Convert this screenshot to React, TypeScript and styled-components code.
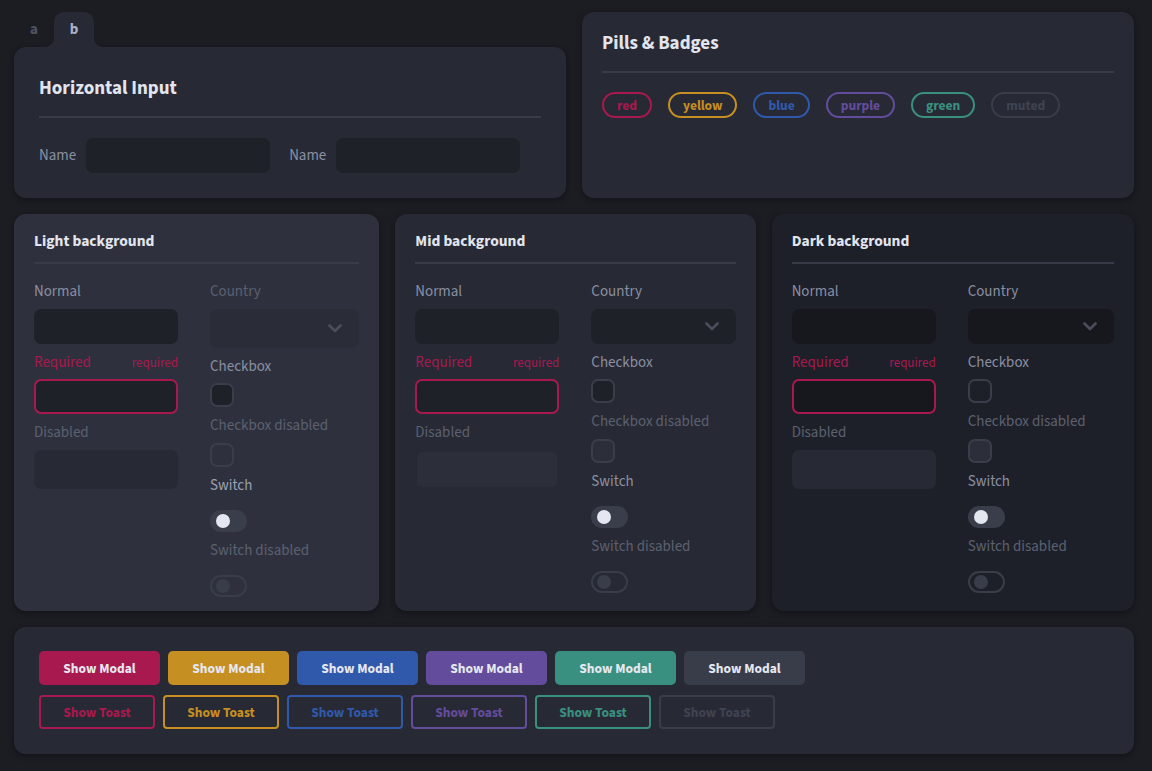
import React from "react";
import styled, { createGlobalStyle } from "styled-components";

const C = {
  page: "#1b1d23",
  card: "#272a34",
  light: "#2e313d",
  dark: "#1e2029",
  input: "#1f2129",
  divider: "#383b48",
  title: "#e2e4ee",
  label: "#8a8fa2",
  muted: "#5c6070",
  red: "#a8194f",
  yellow: "#c68f22",
  blue: "#3159ab",
  purple: "#634c9c",
  green: "#3a9080",
  gray: "#393d4a",
};

const GlobalStyle = createGlobalStyle`
  html, body { margin: 0; padding: 0; background: ${C.page}; }
  body { font-family: "Source Sans Pro", "Source Sans 3", Lato, "Noto Sans", sans-serif; }
  * { box-sizing: border-box; }
`;

const Page = styled.div`
  width: 1152px;
  padding: 12px 18px 18px 14px;
  display: flex;
  flex-direction: column;
`;

const TopRow = styled.div`
  display: grid;
  grid-template-columns: 1fr 1fr;
  gap: 16px;
`;

const MidRow = styled.div`
  display: grid;
  grid-template-columns: 365fr 360fr 362fr;
  gap: 16px;
  margin-top: 16px;
`;

const TabbedBox = styled.div`
  display: flex;
  flex-direction: column;
`;

const TabBar = styled.div`
  display: flex;
  height: 35px;
`;

const Tab = styled.div<{ $active?: boolean }>`
  position: relative;
  width: 40px;
  display: flex;
  align-items: center;
  justify-content: center;
  font-weight: 700;
  font-size: 15px;
  color: ${(p) => (p.$active ? "#a9b0c8" : "#4f5363")};
  background: ${(p) => (p.$active ? C.card : "transparent")};
  border-radius: 10px 10px 0 0;
  &::before,
  &::after {
    content: "";
    display: ${(p) => (p.$active ? "block" : "none")};
    position: absolute;
    bottom: 0;
    width: 10px;
    height: 10px;
  }
  &::before {
    left: -10px;
    background: radial-gradient(circle at 0 0, transparent 10px, ${C.card} 10.5px);
  }
  &::after {
    right: -10px;
    background: radial-gradient(circle at 100% 0, transparent 10px, ${C.card} 10.5px);
  }
`;

const Card = styled.div<{ $bg?: string }>`
  background: ${(p) => p.$bg || C.card};
  border-radius: 12px;
  box-shadow: 0 2px 6px rgba(0, 0, 0, 0.35);
`;

const HorizCard = styled(Card)`
  padding: 30px 25px 25px;
  flex: 1;
`;

const PillsCard = styled(Card)`
  padding: 20px 20px 20px;
`;

const BigTitle = styled.h2`
  margin: 0;
  font-size: 19px;
  line-height: 24px;
  font-weight: 700;
  color: ${C.title};
`;

const Divider = styled.div`
  height: 2px;
  background: ${C.divider};
`;

const HorizDivider = styled(Divider)`
  margin: 15px 0 20px;
`;

const PillsDivider = styled(Divider)`
  margin: 15px 0 19px;
`;

const HorizRow = styled.div`
  display: flex;
  gap: 19px;
`;

const HorizField = styled.label`
  display: flex;
  align-items: center;
  gap: 10px;
  font-size: 15px;
  color: ${C.label};
`;

const TextInput = styled.div<{ $w?: number; $bg?: string }>`
  width: ${(p) => (p.$w ? `${p.$w}px` : "100%")};
  height: 35px;
  border-radius: 7px;
  background: ${(p) => p.$bg || C.input};
`;

const PillRow = styled.div`
  display: flex;
  gap: 16px;
`;

const Pill = styled.span<{ $c: string; $t?: string }>`
  height: 26px;
  padding: 0 13px;
  border: 2px solid ${(p) => p.$c};
  border-radius: 13px;
  color: ${(p) => p.$t || p.$c};
  font-size: 13.5px;
  font-weight: 700;
  display: flex;
  align-items: center;
`;

type Variant = {
  bg: string;
  input: string;
  select: string;
  selectH: number;
  selectLabel: string;
  disabled: string;
  disabledBorder: string;
  check: string;
  checkDis: string;
  switchLabel: string;
};

const variants: Record<string, Variant> = {
  light: {
    bg: C.light,
    input: C.input,
    select: "#2a2d38",
    selectH: 39,
    selectLabel: C.muted,
    disabled: "#272a34",
    disabledBorder: "#272a34",
    check: C.input,
    checkDis: "transparent",
    switchLabel: "#9aa0b2",
  },
  mid: {
    bg: C.card,
    input: C.input,
    select: C.input,
    selectH: 35,
    selectLabel: C.label,
    disabled: "#2c2f3a",
    disabledBorder: C.card,
    check: C.input,
    checkDis: "#2c2f3a",
    switchLabel: C.label,
  },
  dark: {
    bg: C.dark,
    input: "#17181e",
    select: "#17181e",
    selectH: 35,
    selectLabel: C.label,
    disabled: "#272a34",
    disabledBorder: "#272a34",
    check: "transparent",
    checkDis: "#2c2f3a",
    switchLabel: C.label,
  },
};

const DemoCard = styled(Card)`
  padding: 17px 20px 14px;
`;

const DemoTitle = styled.h3`
  margin: 0;
  font-size: 15.5px;
  line-height: 20px;
  font-weight: 700;
  color: ${C.title};
`;

const DemoDivider = styled(Divider)`
  margin: 11px 0 18px;
`;

const DemoGrid = styled.div`
  display: grid;
  grid-template-columns: 144px 1fr;
  column-gap: 32px;
`;

const Column = styled.div`
  display: flex;
  flex-direction: column;
  gap: 9px;
`;

const Field = styled.div<{ $gap?: number }>`
  display: flex;
  flex-direction: column;
  gap: ${(p) => p.$gap ?? 7}px;
`;

const LabelRow = styled.div`
  display: flex;
  justify-content: space-between;
  align-items: baseline;
  height: 20px;
`;

const Label = styled.span<{ $c?: string }>`
  font-size: 15px;
  line-height: 20px;
  color: ${(p) => p.$c || C.label};
`;

const Hint = styled.span`
  font-size: 13px;
  color: ${C.red};
`;

const RequiredInput = styled.div<{ $bg: string }>`
  height: 35px;
  border-radius: 7px;
  background: ${(p) => p.$bg};
  border: 2px solid ${C.red};
`;

const DisabledInput = styled.div<{ $bg: string; $border: string }>`
  height: 39px;
  border-radius: 7px;
  background: ${(p) => p.$bg};
  border: 2px solid ${(p) => p.$border};
`;

const Select = styled.div<{ $bg: string; $h: number }>`
  height: ${(p) => p.$h}px;
  border-radius: 7px;
  background: ${(p) => p.$bg};
  display: flex;
  align-items: center;
  justify-content: flex-end;
  padding-right: 17px;
`;

const Checkbox = styled.div<{ $bg: string }>`
  width: 24px;
  height: 24px;
  border-radius: 7px;
  border: 2px solid #3a3e4b;
  background: ${(p) => p.$bg};
`;

const Switch = styled.div<{ $disabled?: boolean }>`
  position: relative;
  width: 37px;
  height: 22px;
  border-radius: 11px;
  margin-top: 7px;
  background: ${(p) => (p.$disabled ? "transparent" : "#3a3e4b")};
  border: ${(p) => (p.$disabled ? "2px solid #393d49" : "none")};
  &::after {
    content: "";
    position: absolute;
    top: 50%;
    left: ${(p) => (p.$disabled ? "4px" : "6px")};
    width: 14px;
    height: 14px;
    margin-top: -7px;
    border-radius: 50%;
    background: ${(p) => (p.$disabled ? "#393d49" : "#e4e6f0")};
  }
`;

const Chevron = () => (
  <svg width="14" height="9" viewBox="0 0 14 9" fill="none">
    <path d="M1.5 1.5L7 7l5.5-5.5" stroke="#4a4e5c" strokeWidth="2.6" strokeLinecap="round" strokeLinejoin="round" />
  </svg>
);

const ButtonsCard = styled(Card)`
  margin-top: 16px;
  padding: 24px 25px 25px;
  display: flex;
  flex-direction: column;
  gap: 10px;
`;

const ButtonRow = styled.div`
  display: flex;
  gap: 8px;
`;

const ModalButton = styled.button<{ $c: string }>`
  width: 121px;
  height: 34px;
  border: none;
  border-radius: 5px;
  background: ${(p) => p.$c};
  color: #e6e8f0;
  font-family: inherit;
  font-size: 13.5px;
  font-weight: 700;
  padding: 0;
`;

const ToastButton = styled.button<{ $c: string; $t?: string }>`
  width: 116px;
  height: 34px;
  border: 2px solid ${(p) => p.$c};
  border-radius: 4px;
  background: transparent;
  color: ${(p) => p.$t || p.$c};
  font-family: inherit;
  font-size: 13.5px;
  font-weight: 700;
  padding: 0;
`;

const DemoPanel = ({ title, v }: { title: string; v: Variant }) => (
  <DemoCard $bg={v.bg}>
    <DemoTitle>{title}</DemoTitle>
    <DemoDivider />
    <DemoGrid>
      <Column>
        <Field>
          <Label>Normal</Label>
          <TextInput $bg={v.input} />
        </Field>
        <Field $gap={6}>
          <LabelRow>
            <Label $c={C.red}>Required</Label>
            <Hint>required</Hint>
          </LabelRow>
          <RequiredInput $bg={v.input} />
        </Field>
        <Field>
          <Label $c={C.muted}>Disabled</Label>
          <DisabledInput $bg={v.disabled} $border={v.disabledBorder} />
        </Field>
      </Column>
      <Column>
        <Field>
          <Label $c={v.selectLabel}>Country</Label>
          <Select $bg={v.select} $h={v.selectH}>
            <Chevron />
          </Select>
        </Field>
        <Field $gap={6}>
          <Label>Checkbox</Label>
          <Checkbox $bg={v.check} />
        </Field>
        <Field>
          <Label $c={C.muted}>Checkbox disabled</Label>
          <Checkbox $bg={v.checkDis} />
        </Field>
        <Field>
          <Label $c={v.switchLabel}>Switch</Label>
          <Switch />
        </Field>
        <Field>
          <Label $c={C.muted}>Switch disabled</Label>
          <Switch $disabled />
        </Field>
      </Column>
    </DemoGrid>
  </DemoCard>
);

const colors = [C.red, C.yellow, C.blue, C.purple, C.green];

export default function App() {
  return (
    <>
      <GlobalStyle />
      <Page>
        <TopRow>
          <TabbedBox>
            <TabBar>
              <Tab>a</Tab>
              <Tab $active>b</Tab>
            </TabBar>
            <HorizCard>
              <BigTitle>Horizontal Input</BigTitle>
              <HorizDivider />
              <HorizRow>
                <HorizField>
                  Name
                  <TextInput $w={184} />
                </HorizField>
                <HorizField>
                  Name
                  <TextInput $w={184} />
                </HorizField>
              </HorizRow>
            </HorizCard>
          </TabbedBox>
          <PillsCard>
            <BigTitle>Pills &amp; Badges</BigTitle>
            <PillsDivider />
            <PillRow>
              <Pill $c={C.red}>red</Pill>
              <Pill $c={C.yellow}>yellow</Pill>
              <Pill $c={C.blue}>blue</Pill>
              <Pill $c={C.purple}>purple</Pill>
              <Pill $c={C.green}>green</Pill>
              <Pill $c={C.gray} $t="#3f4352">muted</Pill>
            </PillRow>
          </PillsCard>
        </TopRow>
        <MidRow>
          <DemoPanel title="Light background" v={variants.light} />
          <DemoPanel title="Mid background" v={variants.mid} />
          <DemoPanel title="Dark background" v={variants.dark} />
        </MidRow>
        <ButtonsCard>
          <ButtonRow>
            {[...colors, C.gray].map((c, i) => (
              <ModalButton key={i} $c={c}>Show Modal</ModalButton>
            ))}
          </ButtonRow>
          <ButtonRow>
            {colors.map((c, i) => (
              <ToastButton key={i} $c={c}>Show Toast</ToastButton>
            ))}
            <ToastButton $c={C.gray} $t="#3f4352">Show Toast</ToastButton>
          </ButtonRow>
        </ButtonsCard>
      </Page>
    </>
  );
}
